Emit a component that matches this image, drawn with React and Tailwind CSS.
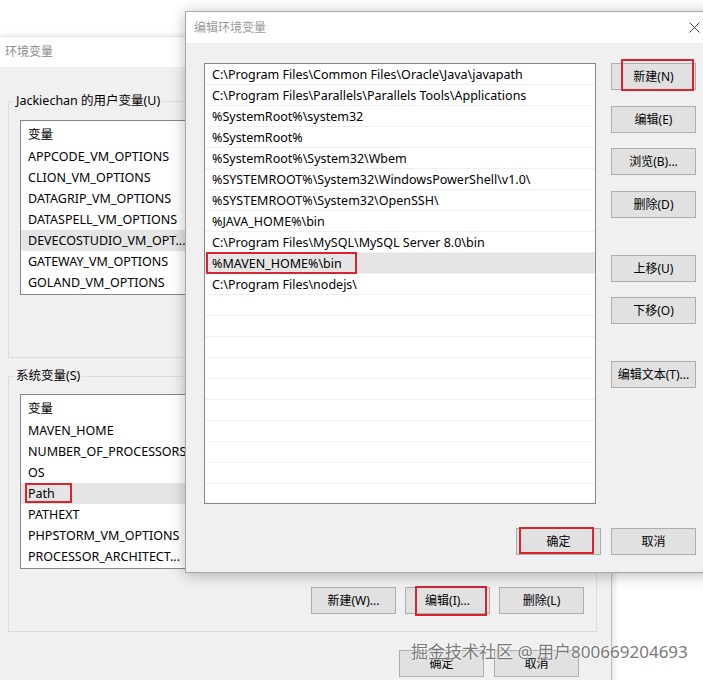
import React from 'react';

const userVars = [
  'APPCODE_VM_OPTIONS',
  'CLION_VM_OPTIONS',
  'DATAGRIP_VM_OPTIONS',
  'DATASPELL_VM_OPTIONS',
  'DEVECOSTUDIO_VM_OPT...',
  'GATEWAY_VM_OPTIONS',
  'GOLAND_VM_OPTIONS',
];

const sysVars = [
  'MAVEN_HOME',
  'NUMBER_OF_PROCESSORS',
  'OS',
  'Path',
  'PATHEXT',
  'PHPSTORM_VM_OPTIONS',
  'PROCESSOR_ARCHITECT...',
];

const paths = [
  'C:\\Program Files\\Common Files\\Oracle\\Java\\javapath',
  'C:\\Program Files\\Parallels\\Parallels Tools\\Applications',
  '%SystemRoot%\\system32',
  '%SystemRoot%',
  '%SystemRoot%\\System32\\Wbem',
  '%SYSTEMROOT%\\System32\\WindowsPowerShell\\v1.0\\',
  '%SYSTEMROOT%\\System32\\OpenSSH\\',
  '%JAVA_HOME%\\bin',
  'C:\\Program Files\\MySQL\\MySQL Server 8.0\\bin',
  '%MAVEN_HOME%\\bin',
  'C:\\Program Files\\nodejs\\',
];

// windows-style push button, `mark` is the red highlight drawn over it
function Btn({ children, mark, className = '' }) {
  return (
    <div className={`relative flex h-[27px] w-[85px] shrink-0 items-center justify-center border border-[#adadad] bg-[#e1e1e1] text-[12px] text-black ${className}`}>
      {children}
      {mark}
    </div>
  );
}

function VarList({ rows, selected, markSelected, className = '' }) {
  return (
    <div className={`flex h-[175px] flex-col overflow-hidden border border-[#828790] bg-white text-[12.5px] text-black ${className}`}>
      <div className="flex h-[25px] shrink-0 items-center pl-[7px] pt-[3px]">变量</div>
      {rows.map((r, i) => (
        <div
          key={r}
          className={`relative flex h-[21px] shrink-0 items-center whitespace-nowrap pl-[7px] pt-[2px] ${i === selected ? 'bg-[#e5e5e5]' : ''}`}
        >
          {r}
          {i === selected && markSelected}
        </div>
      ))}
    </div>
  );
}

function EnvWindow() {
  return (
    <div className="absolute left-0 top-[36px] flex h-[660px] w-[612px] flex-col border-r border-[#bdbdbd] shadow-[2px_0_6px_rgba(0,0,0,0.12)]">
      <div className="flex h-[31px] shrink-0 items-center border-t border-[#e6e6e6] bg-white pl-[5px] text-[12px] text-[#8c8c8c]">
        环境变量
      </div>
      <div className="flex flex-1 flex-col bg-[#f0f0f0] pl-[8px] pr-[14px]">
        <fieldset className="mt-[24px] border border-[#dcdcdc] pb-[62px] pr-[12px]">
          <legend className="ml-[4px] px-[3px] text-[12.5px] leading-[20px] text-black">Jackiechan 的用户变量(U)</legend>
          <VarList rows={userVars} selected={4} className="ml-[11px] mt-[9px]" />
        </fieldset>
        <fieldset className="mt-[8px] border border-[#dcdcdc] pb-[17px] pr-[12px]">
          <legend className="ml-[4px] px-[3px] text-[12.5px] leading-[20px] text-black">系统变量(S)</legend>
          <VarList
            rows={sysVars}
            selected={3}
            className="ml-[11px] mt-[8px]"
            markSelected={<div className="absolute left-[4px] top-0 h-[20px] w-[47px] border-2 border-[#d9232d]" />}
          />
          <div className="mt-[18px] flex justify-end gap-[9px]">
            <Btn>新建(W)...</Btn>
            <Btn mark={<div className="absolute left-[9px] top-[-2px] h-[30px] w-[72px] border-2 border-[#d9232d]" />}>编辑(I)...</Btn>
            <Btn>删除(L)</Btn>
          </div>
        </fieldset>
        <div className="mt-[18px] flex justify-end gap-[10px] pr-[18px]">
          <Btn>确定</Btn>
          <Btn>取消</Btn>
        </div>
      </div>
    </div>
  );
}

function EditDialog() {
  const filler = Array.from({ length: 21 - paths.length });
  return (
    <div className="absolute left-[185px] top-[11px] flex h-[562px] w-[530px] flex-col border border-[#a8a8a8] shadow-[0_2px_14px_rgba(0,0,0,0.28)]">
      <div className="flex h-[31px] shrink-0 items-center justify-between bg-white pl-[8px] pr-[14px] text-[12px] text-[#999999]">
        <span>编辑环境变量</span>
        <svg width="11" height="11" viewBox="0 0 11 11" className="text-[#444]">
          <path d="M0.5 0.5L10.5 10.5M10.5 0.5L0.5 10.5" stroke="currentColor" strokeWidth="1" />
        </svg>
      </div>
      <div className="flex flex-1 flex-col bg-[#f0f0f0] pl-[18px] pt-[20px]">
        <div className="flex">
          <div className="flex h-[441px] w-[392px] flex-col overflow-hidden border border-[#828790] bg-white text-[12.5px] text-black">
            {paths.map((p, i) => (
              <div
                key={p}
                className={`relative flex h-[21px] shrink-0 items-center whitespace-nowrap border-b border-[#f0f0f0] pl-[7px] pt-[2px] ${i === 9 ? 'bg-[#e5e5e5]' : ''}`}
              >
                {p}
                {i === 9 && <div className="absolute left-[1px] top-[-1px] h-[22px] w-[151px] border-2 border-[#d9232d]" />}
              </div>
            ))}
            {filler.map((_, i) => (
              <div key={i} className="h-[21px] shrink-0 border-b border-[#f0f0f0]" />
            ))}
          </div>
          <div className="ml-[15px] flex flex-col">
            <Btn mark={<div className="absolute left-[9px] top-[-5px] h-[32px] w-[73px] border-2 border-[#d9232d]" />}>新建(N)</Btn>
            <Btn className="mt-[16px]">编辑(E)</Btn>
            <Btn className="mt-[15px]">浏览(B)...</Btn>
            <Btn className="mt-[16px]">删除(D)</Btn>
            <Btn className="mt-[37px]">上移(U)</Btn>
            <Btn className="mt-[15px]">下移(O)</Btn>
            <Btn className="mt-[37px]">编辑文本(T)...</Btn>
          </div>
        </div>
        <div className="mt-[24px] flex w-[492px] justify-end gap-[10px]">
          <Btn mark={<div className="absolute left-[2px] top-[-2px] h-[27px] w-[75px] border-2 border-[#d9232d]" />}>确定</Btn>
          <Btn>取消</Btn>
        </div>
      </div>
    </div>
  );
}

export default function App() {
  return (
    <div className="relative h-[680px] w-[703px] overflow-hidden bg-white font-['Noto_Sans','Noto_Sans_CJK_SC',sans-serif]">
      <EnvWindow />
      <EditDialog />
      <div className="absolute left-[411px] top-[641px] whitespace-nowrap text-[17px] leading-[22px] text-[#7a7a7a] [text-shadow:0_0_2px_#fff,0_0_2px_#fff]">
        掘金技术社区 @ 用户800669204693
      </div>
    </div>
  );
}
